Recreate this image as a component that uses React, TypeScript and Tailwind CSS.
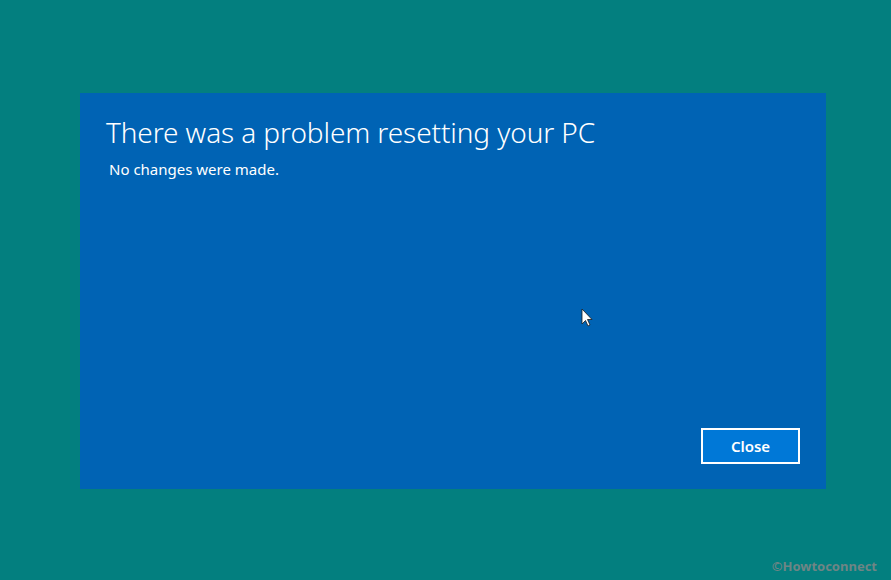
export default function App() {
  return (
    <div className="relative w-[891px] h-[580px] bg-[#037f7f] pt-[93px] pl-[80px]" style={{ fontFamily: '"Noto Sans", "Open Sans", sans-serif' }}>
      <div className="relative w-[746px] h-[396px] bg-[#0063b4] flex flex-col">
        <h1 className="mt-[19px] ml-[26px] text-[28px] font-light text-white leading-[40px] tracking-[-0.1px]">
          There was a problem resetting your PC
        </h1>
        <p className="mt-[7px] ml-[29px] text-[15px] text-white leading-[20px]">No changes were made.</p>
        <div className="flex-1" />
        <div className="flex justify-end pr-[26px] pb-[25px]">
          <button className="w-[99px] h-[36px] bg-[#0078d7] border-2 border-white text-white text-[15px] font-semibold">
            Close
          </button>
        </div>
        <svg className="absolute left-[501px] top-[215px]" width="12" height="20" viewBox="0 0 12 20">
          <path d="M1 1 L1 16 L4.5 12.5 L7 18 L9 17 L6.5 11.5 L11 11.5 Z" fill="white" stroke="#1a1a1a" strokeWidth="0.8" />
        </svg>
      </div>
      <div className="absolute right-[14px] bottom-[4px] text-[13px] font-bold text-[#6f8585]">©Howtoconnect</div>
    </div>
  );
}
